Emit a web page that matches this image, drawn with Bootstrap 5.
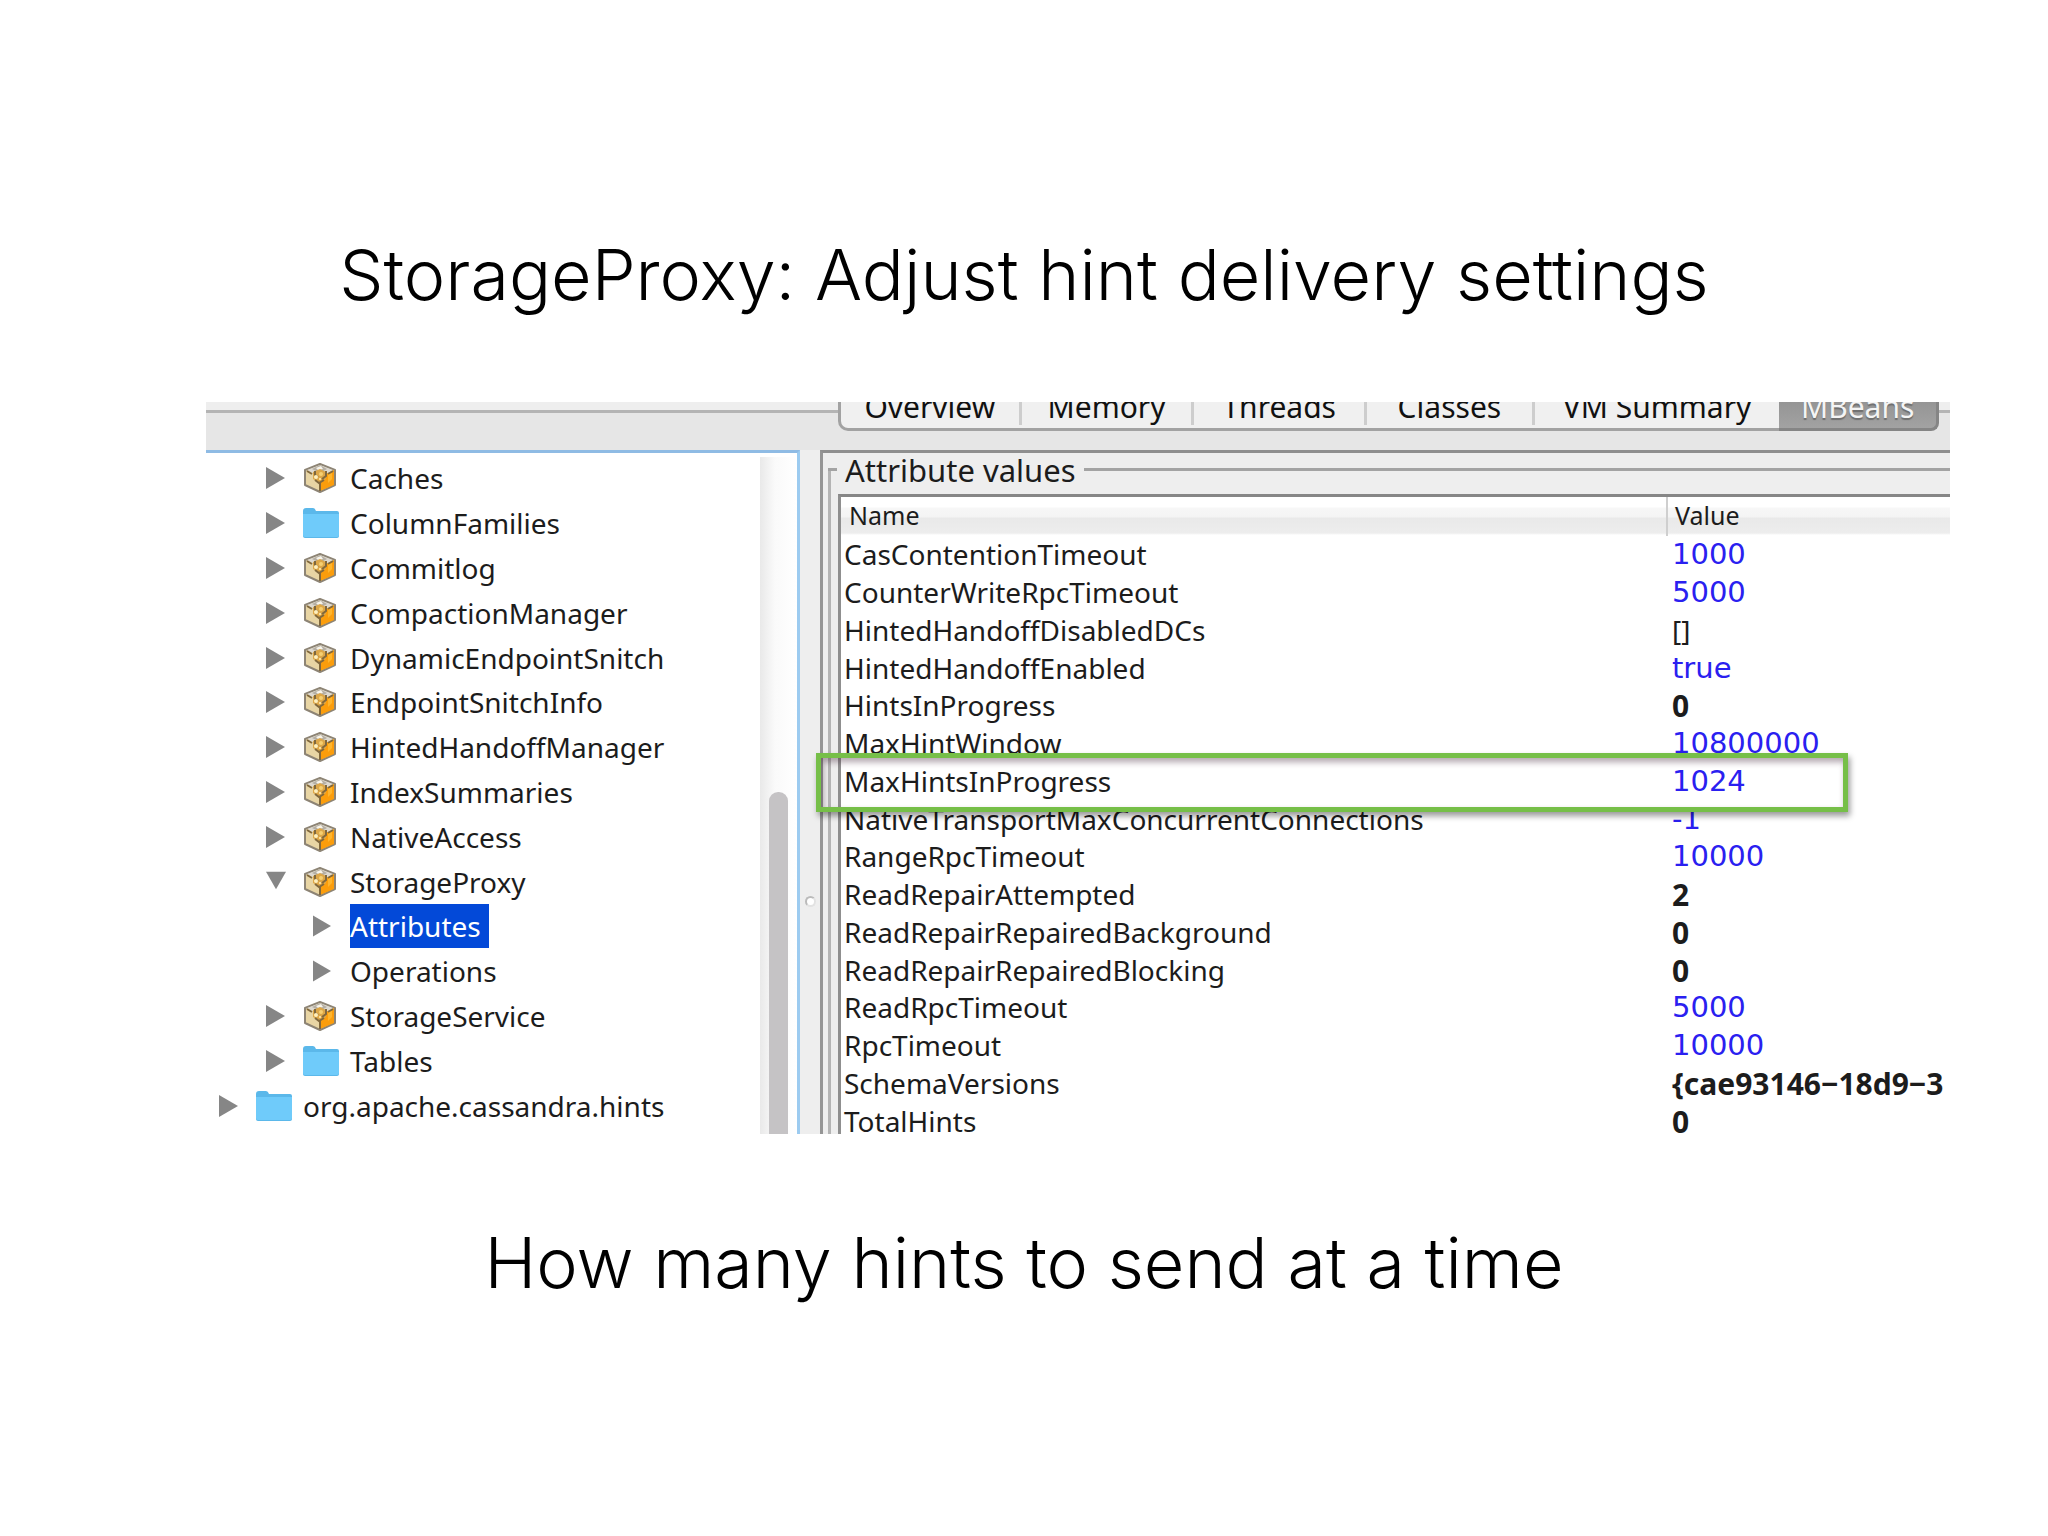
<!DOCTYPE html>
<html lang="en">
<head>
<meta charset="utf-8">
<meta name="viewport" content="width=device-width, initial-scale=1">
<title>StorageProxy: Adjust hint delivery settings</title>
<link rel="stylesheet" href="https://cdn.jsdelivr.net/npm/bootstrap@5.3.0/dist/css/bootstrap.min.css">
<style>
  body { background: #fff; color: #000; }
  .slide-text { font-family: Inter, "Liberation Sans", sans-serif; font-weight: 300; font-size: 70px; line-height: 84px; }
  .slide-title { padding-top: 233px; padding-bottom: 85px; }
  .slide-foot { padding-top: 87px; }
  .console { margin-left: 206px; margin-right: 98px; height: 732px; background: #eee; font-family: "Noto Sans", "Open Sans", sans-serif; font-size: 28px; color: #1c1c1c; }
  .tab-strip { height: 48px; padding: 0 11px 19px 632px; background: linear-gradient(#eee 0 8px, #b4b4b4 8px 11px, #e6e6e6 11px); }
  .tab-set { height: 46px; }
  .tab-btn { height: 46px; font-size: 30px; line-height: 40px; border: 0; border-bottom: 3px solid #a2a2a2; background: #f0f0f0; color: #111; padding: 0; white-space: nowrap; }
  .tab-btn + .tab-btn::before { content: ""; float: left; width: 3px; height: 38px; background: #cdcdcd; }
  .tab-btn:first-child { border-left: 3px solid #a2a2a2; border-bottom-left-radius: 10px; }
  .tab-btn.on { background: linear-gradient(#8c8c8c, #a2a2a2); border-color: #858585; border-right: 3px solid #858585; border-bottom-right-radius: 8px; color: #f4f4f4; text-shadow: 0 2px 1px #6e6e6e; }
  .tab-btn.on::before { display: none; }
  .w-a { flex: 178 0 0; } .w-b { flex: 173 0 0; } .w-c { flex: 168 0 0; } .w-d { flex: 248 0 0; } .w-e { flex: 157 0 0; }
  .tree-pane { width: 594px; border-top: 3px solid #8fbbe4; border-right: 3px solid #9ccbf0; background: #fff; }
  .tree-list { height: 672px; margin-top: 3px; }
  .tree-row { gap: 11px; padding-left: 60px; line-height: 44px; }
  .tree-row.root { padding-left: 13px; }
  .tree-row.leaf { padding-left: 107px; gap: 19px; }
  .tree-row svg { flex: none; }
  .picked { background: #0349d8; color: #fff; padding-right: 8px; }
  .scroll-track { width: 37px; margin-top: 4px; background: linear-gradient(90deg, #e9e9e9, #fafafa 40%, #fff); padding: 335px 9px 0 9px; }
  .scroll-thumb { background: #c5c3c5; border-radius: 9px 9px 0 0; }
  .split-bar { width: 20px; padding-top: 446px; }
  .split-dot { width: 11px; height: 11px; border: 2px solid #bbb; background: #fff; border-right-color: #e2e2e2; border-bottom-color: #e2e2e2; }
  .attr-pane { border-top: 3px solid #8f8f8f; border-left: 3px solid #959595; padding-left: 5px; min-width: 0; }
  .attr-legend { height: 41px; font-size: 31px; line-height: 34px; gap: 8px; }
  .attr-legend::before, .attr-legend::after { content: ""; height: 3px; background: #a3a3a3; margin-top: 15px; }
  .attr-legend::before { width: 9px; }
  .attr-legend::after { flex: 1; }
  .attr-body { margin-top: -24px; padding: 24px 0 0 7px; border-left: 3px solid #b4b4b4; }
  .attr-frame { border-left: 3px solid #8f8f8f; border-top: 3px solid #868686; background: #fff; }
  .attr-table { table-layout: fixed; width: 100%; border-collapse: collapse; }
  .attr-table th { height: 39px; padding: 0 0 4px 8px; font-size: 25px; line-height: 34px; font-weight: 400; background: linear-gradient(#fff 0 10px, #f7f7f7 11px, #f4f4f4 20px, #e9e9e9 21px, #ededed 36px, #fff 38px); }
  .attr-table .val-head { border-left: 2px solid #cfcfcf; padding-left: 7px; }
  .attr-table .name-col { width: 826px; }
  .attr-table tbody { height: 604px; }
  .attr-table td { padding: 0 0 0 3px; line-height: 37px; white-space: nowrap; }
  .attr-table td + td { padding-left: 5px; }
  .attr-table .num { color: #2a20f0; font-family: "DejaVu Sans", sans-serif; font-size: 29px; }
  .attr-table .fw-bold { font-size: 30px; }
  .ring { left: -25px; top: -10px; width: 1032px; height: 59px; border: 5px solid #76bf48; box-shadow: 2px 4px 6px rgba(0,0,0,.4), inset 2px 4px 6px rgba(60,30,50,.4); }
</style>
</head>
<body>
<svg class="d-none">
  <symbol id="arrow-right" viewBox="0 0 19 22"><path d="M0 0L19 11L0 22Z" fill="#868686"/></symbol>
  <symbol id="arrow-down" viewBox="0 0 22 19"><path d="M0 0H22L11 19Z" fill="#868686"/></symbol>
  <symbol id="folder" viewBox="0 0 36 30"><path d="M0 3Q0 0 3 0H10Q12 0 13 3H34Q36 3 36 5V28Q36 30 34 30H2Q0 30 0 28Z" fill="#5bb8ea"/><path d="M0 6H36V27Q36 29 34 29H2Q0 29 0 27Z" fill="#6fcbfa"/></symbol>
  <symbol id="bean" viewBox="0 0 32 30">
    <path d="M16 1L31 7V22L16 29L1 22V7Z" fill="#e8d5a4" stroke="#8d8475" stroke-width="2" stroke-linejoin="round"/>
    <path d="M16 14L30 7V22L16 28Z" fill="#fb9d0c"/>
    <path d="M16 2L29 7L16 14L3 7Z" fill="#ddd9d0"/>
    <path d="M8 6L16 2L23 6L16 10Z" fill="#b5afa4"/><path d="M12 5L17 3L19 6L14 7Z" fill="#f7f4ea"/>
    <path d="M9 9L16 6L22 9V16L16 20L9 16Z" fill="#dda748"/>
    <path d="M11 8V12L14 14M22 8V13L18 16M11 17L15 20L20 17M16 20V28M3 8L8 11M29 8L24 11" fill="none" stroke="#80683d" stroke-width="2"/>
    <circle cx="12" cy="14" r="2" fill="#fff0bd"/><circle cx="17" cy="11" r="2" fill="#f6cf70"/><circle cx="16" cy="16" r="1" fill="#fff0bd"/>
    <path d="M24 12L28 10V16L24 20Z" fill="#ffb52c"/>
  </symbol>
</svg>
<main>
  <h1 class="slide-text slide-title text-center m-0">StorageProxy: Adjust hint delivery settings</h1>

  <section class="console overflow-hidden d-flex flex-column">
    <div class="tab-strip d-flex align-items-end flex-shrink-0">
      <nav class="tab-set d-flex w-100">
        <button class="tab-btn w-a">Overview</button>
        <button class="tab-btn w-b">Memory</button>
        <button class="tab-btn w-b">Threads</button>
        <button class="tab-btn w-c">Classes</button>
        <button class="tab-btn w-d">VM Summary</button>
        <button class="tab-btn w-e on">MBeans</button>
      </nav>
    </div>

    <div class="d-flex flex-grow-1">
      <div class="tree-pane d-flex flex-shrink-0">
        <ul class="tree-list list-unstyled d-flex flex-column flex-grow-1 mb-0">
          <li class="tree-row d-flex align-items-center flex-fill"><svg width="26" height="22"><use href="#arrow-right" width="19" height="22"/></svg><svg width="36" height="30"><use href="#bean" width="34" height="30"/></svg><span>Caches</span></li>
          <li class="tree-row d-flex align-items-center flex-fill"><svg width="26" height="22"><use href="#arrow-right" width="19" height="22"/></svg><svg width="36" height="30"><use href="#folder" width="36" height="30"/></svg><span>ColumnFamilies</span></li>
          <li class="tree-row d-flex align-items-center flex-fill"><svg width="26" height="22"><use href="#arrow-right" width="19" height="22"/></svg><svg width="36" height="30"><use href="#bean" width="34" height="30"/></svg><span>Commitlog</span></li>
          <li class="tree-row d-flex align-items-center flex-fill"><svg width="26" height="22"><use href="#arrow-right" width="19" height="22"/></svg><svg width="36" height="30"><use href="#bean" width="34" height="30"/></svg><span>CompactionManager</span></li>
          <li class="tree-row d-flex align-items-center flex-fill"><svg width="26" height="22"><use href="#arrow-right" width="19" height="22"/></svg><svg width="36" height="30"><use href="#bean" width="34" height="30"/></svg><span>DynamicEndpointSnitch</span></li>
          <li class="tree-row d-flex align-items-center flex-fill"><svg width="26" height="22"><use href="#arrow-right" width="19" height="22"/></svg><svg width="36" height="30"><use href="#bean" width="34" height="30"/></svg><span>EndpointSnitchInfo</span></li>
          <li class="tree-row d-flex align-items-center flex-fill"><svg width="26" height="22"><use href="#arrow-right" width="19" height="22"/></svg><svg width="36" height="30"><use href="#bean" width="34" height="30"/></svg><span>HintedHandoffManager</span></li>
          <li class="tree-row d-flex align-items-center flex-fill"><svg width="26" height="22"><use href="#arrow-right" width="19" height="22"/></svg><svg width="36" height="30"><use href="#bean" width="34" height="30"/></svg><span>IndexSummaries</span></li>
          <li class="tree-row d-flex align-items-center flex-fill"><svg width="26" height="22"><use href="#arrow-right" width="19" height="22"/></svg><svg width="36" height="30"><use href="#bean" width="34" height="30"/></svg><span>NativeAccess</span></li>
          <li class="tree-row d-flex align-items-center flex-fill"><svg width="26" height="22"><use href="#arrow-down" width="20" height="19"/></svg><svg width="36" height="30"><use href="#bean" width="34" height="30"/></svg><span>StorageProxy</span></li>
          <li class="tree-row leaf d-flex align-items-center flex-fill"><svg width="18" height="22"><use href="#arrow-right" width="18" height="22"/></svg><span class="picked">Attributes</span></li>
          <li class="tree-row leaf d-flex align-items-center flex-fill"><svg width="18" height="22"><use href="#arrow-right" width="18" height="22"/></svg><span>Operations</span></li>
          <li class="tree-row d-flex align-items-center flex-fill"><svg width="26" height="22"><use href="#arrow-right" width="19" height="22"/></svg><svg width="36" height="30"><use href="#bean" width="34" height="30"/></svg><span>StorageService</span></li>
          <li class="tree-row d-flex align-items-center flex-fill"><svg width="26" height="22"><use href="#arrow-right" width="19" height="22"/></svg><svg width="36" height="30"><use href="#folder" width="36" height="30"/></svg><span>Tables</span></li>
          <li class="tree-row root d-flex align-items-center flex-fill"><svg width="26" height="22"><use href="#arrow-right" width="19" height="22"/></svg><svg width="36" height="30"><use href="#folder" width="36" height="30"/></svg><span>org.apache.cassandra.hints</span></li>
        </ul>
        <div class="scroll-track d-flex flex-shrink-0"><div class="scroll-thumb w-100"></div></div>
      </div>

      <div class="split-bar d-flex flex-shrink-0 align-items-start justify-content-center"><span class="split-dot rounded-circle"></span></div>

      <div class="attr-pane flex-grow-1">
        <div class="attr-legend d-flex">Attribute values</div>
        <div class="attr-body">
          <div class="attr-frame">
            <table class="attr-table">
              <thead><tr><th class="name-col" scope="col">Name</th><th class="val-head" scope="col">Value</th></tr></thead>
              <tbody>
                <tr><td>CasContentionTimeout</td><td class="num">1000</td></tr>
                <tr><td>CounterWriteRpcTimeout</td><td class="num">5000</td></tr>
                <tr><td>HintedHandoffDisabledDCs</td><td>[]</td></tr>
                <tr><td>HintedHandoffEnabled</td><td class="num">true</td></tr>
                <tr><td>HintsInProgress</td><td class="fw-bold">0</td></tr>
                <tr><td>MaxHintWindow</td><td class="num">10800000</td></tr>
                <tr><td class="position-relative">MaxHintsInProgress<span class="ring position-absolute"></span></td><td class="num">1024</td></tr>
                <tr><td>NativeTransportMaxConcurrentConnections</td><td class="num">-1</td></tr>
                <tr><td>RangeRpcTimeout</td><td class="num">10000</td></tr>
                <tr><td>ReadRepairAttempted</td><td class="fw-bold">2</td></tr>
                <tr><td>ReadRepairRepairedBackground</td><td class="fw-bold">0</td></tr>
                <tr><td>ReadRepairRepairedBlocking</td><td class="fw-bold">0</td></tr>
                <tr><td>ReadRpcTimeout</td><td class="num">5000</td></tr>
                <tr><td>RpcTimeout</td><td class="num">10000</td></tr>
                <tr><td>SchemaVersions</td><td class="fw-bold">{cae93146−18d9−3</td></tr>
                <tr><td>TotalHints</td><td class="fw-bold">0</td></tr>
              </tbody>
            </table>
          </div>
        </div>
      </div>
    </div>
  </section>

  <p class="slide-text slide-foot text-center m-0">How many hints to send at a time</p>
</main>
<script src="https://cdn.jsdelivr.net/npm/bootstrap@5.3.0/dist/js/bootstrap.bundle.min.js"></script>
</body>
</html>
